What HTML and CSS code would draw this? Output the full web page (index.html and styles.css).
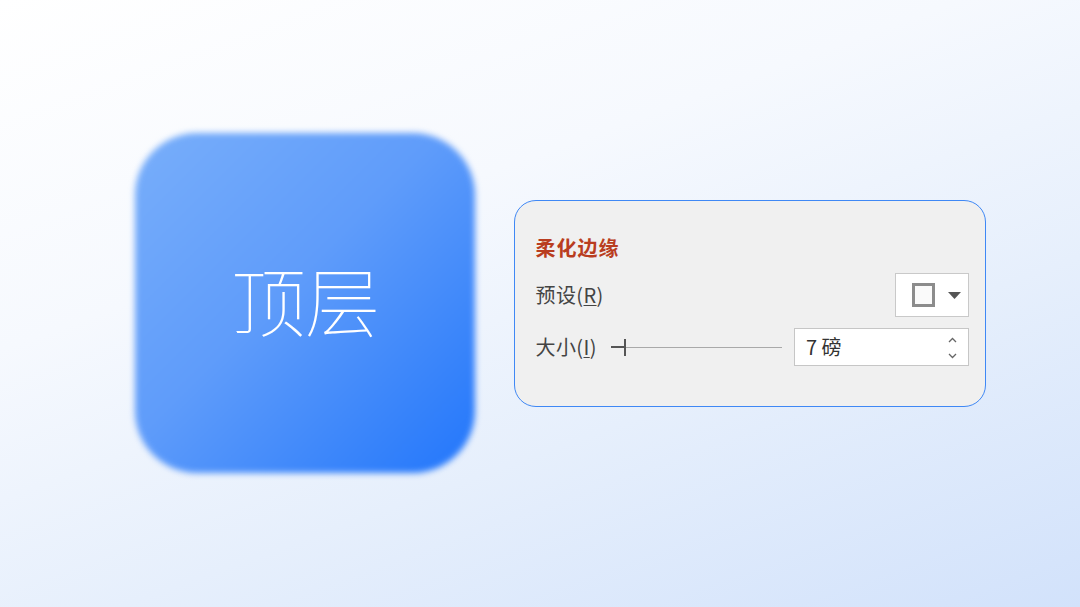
FILE: index.html
```html
<!DOCTYPE html>
<html lang="zh">
<head>
<meta charset="utf-8">
<link rel="stylesheet" href="styles.css">
</head>
<body>
<div class="stage">
  <div class="tile"><span class="tile-text">顶层</span></div>
  <div class="panel">
    <div class="title">柔化边缘</div>
    <div class="row row-preset">
      <span class="label">预设(<u>R</u>)</span>
      <div class="preset-btn">
        <span class="preset-square"></span>
        <svg class="caret" width="13" height="7" viewBox="0 0 13 7"><polygon points="0,0 13,0 6.5,7" fill="#555"/></svg>
      </div>
    </div>
    <div class="row row-size">
      <span class="label">大小(<u>I</u>)</span>
      <div class="slider">
        <span class="slider-lead"></span>
        <span class="slider-thumb"></span>
        <span class="slider-track"></span>
      </div>
      <div class="num-input">
        <span class="num-value">7 磅</span>
        <span class="spin">
          <svg width="9" height="6" viewBox="0 0 9 6"><polyline points="1,5 4.5,1.5 8,5" fill="none" stroke="#666" stroke-width="1.3"/></svg>
          <svg width="9" height="6" viewBox="0 0 9 6"><polyline points="1,1 4.5,4.5 8,1" fill="none" stroke="#666" stroke-width="1.3"/></svg>
        </span>
      </div>
    </div>
  </div>
</div>
</body>
</html>
```

FILE: styles.css
```css
html, body {
  margin: 0;
  padding: 0;
}
body {
  width: 1080px;
  height: 607px;
  overflow: hidden;
  background: linear-gradient(160deg, #ffffff 0%, #f6f9fe 35%, #e6effc 65%, #d2e2fb 100%);
  font-family: "Noto Sans CJK SC", "Noto Sans", sans-serif;
}
.stage {
  display: flex;
  align-items: flex-start;
  padding: 133px 0 0 135px;
}
.tile {
  position: relative;
  isolation: isolate;
  width: 340px;
  height: 340px;
  display: flex;
  align-items: center;
  justify-content: center;
  flex-shrink: 0;
}
.tile::before {
  content: "";
  position: absolute;
  inset: 0;
  border-radius: 62px;
  background: linear-gradient(135deg, #78aefa 0%, #5f9cfa 45%, #2276fb 100%);
  filter: blur(3px);
  z-index: -1;
}
.tile-text {
  color: #ffffff;
  font-size: 75px;
  font-weight: 100;
  line-height: 1;
  letter-spacing: -1px;
  margin-top: -9px;
}
.panel {
  margin: 67px 0 0 39px;
  width: 472px;
  height: 207px;
  box-sizing: border-box;
  border: 1.5px solid #3f88f5;
  border-radius: 22px;
  background: #f0f0f0;
  padding: 35px 16px 0 20.5px;
  display: flex;
  flex-direction: column;
}
.title {
  color: #b93d20;
  font-size: 20px;
  font-weight: 700;
  line-height: 24px;
  height: 24px;
  letter-spacing: 1px;
}
.row {
  display: flex;
  align-items: center;
}
.row-preset {
  margin-top: 13px;
  justify-content: space-between;
}
.row-size {
  margin-top: 11px;
}
.label {
  color: #444;
  font-size: 20px;
  line-height: 24px;
  letter-spacing: 0.4px;
}
.label u {
  text-underline-offset: 2px;
  text-decoration-thickness: 1px;
}
.preset-btn {
  width: 74px;
  height: 44px;
  box-sizing: border-box;
  border: 1px solid #c9c9c9;
  background: #ffffff;
  display: flex;
  align-items: center;
  padding-left: 16px;
}
.preset-square {
  width: 23px;
  height: 24px;
  box-sizing: border-box;
  border: 3px solid #8c8c8c;
  background: #fafafa;
}
.caret {
  margin-left: 13px;
}
.slider {
  flex: 1;
  display: flex;
  align-items: center;
  margin: 0 12px 0 14px;
  height: 20px;
}
.slider-lead {
  width: 13px;
  height: 2px;
  background: #555;
}
.slider-thumb {
  width: 2px;
  height: 17px;
  background: #555;
}
.slider-track {
  flex: 1;
  height: 1px;
  background: #a9a9a9;
}
.num-input {
  width: 175px;
  height: 38px;
  box-sizing: border-box;
  border: 1px solid #c6c6c6;
  background: #ffffff;
  display: flex;
  align-items: center;
  justify-content: space-between;
  padding: 0 11px 0 11px;
}
.num-value {
  color: #333;
  font-size: 20px;
  line-height: 24px;
}
.spin {
  display: flex;
  flex-direction: column;
  justify-content: space-between;
  height: 24px;
  padding-top: 2px;
  box-sizing: border-box;
}
.spin svg {
  display: block;
}
```
